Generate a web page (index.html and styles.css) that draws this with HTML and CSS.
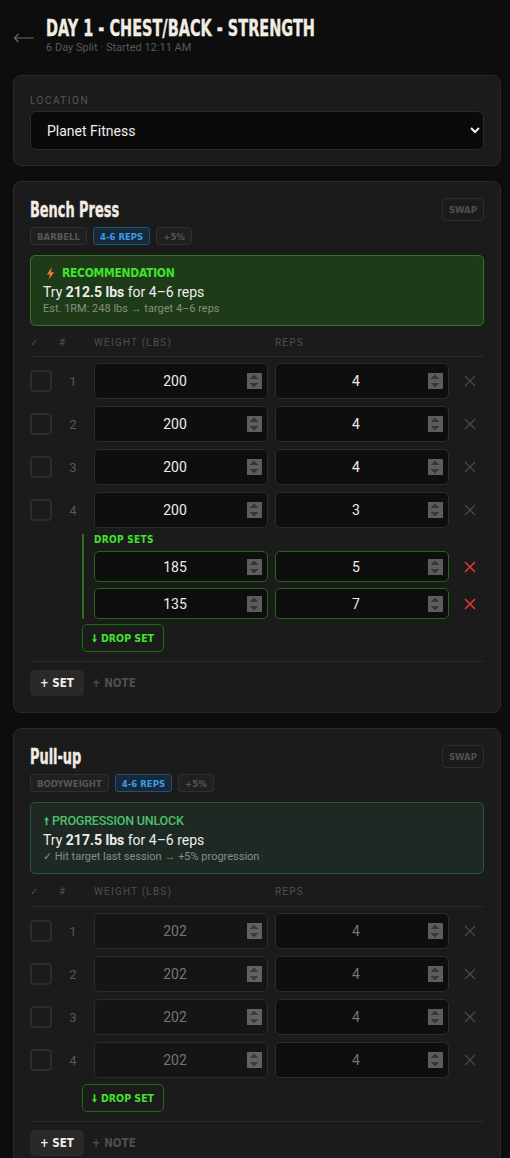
FILE: index.html
```html
<!DOCTYPE html>
<html lang="en">
<head>
<meta charset="utf-8">
<title>Day 1 - Chest/Back - Strength</title>
<link rel="stylesheet" href="styles.css">
</head>
<body>
<div class="page">
  <header class="top">
    <svg class="back" viewBox="0 0 22 10" aria-hidden="true"><path d="M21 5H1.5M5.5 1L1.5 5l4 4" fill="none" stroke="#6a6a6a" stroke-width="1.2"/></svg>
    <div class="top-text">
      <h1 class="title"><span class="cond">DAY 1 - CHEST/BACK - STRENGTH</span></h1>
      <div class="sub">6 Day Split · Started 12:11 AM</div>
    </div>
  </header>

  <section class="card loc">
    <label class="loc-label" for="loc">LOCATION</label>
    <select id="loc" class="loc-select"><option>Planet Fitness</option></select>
  </section>

  <section class="card ex">
    <div class="ex-head">
      <div>
        <h2 class="ex-name"><span class="cond">Bench Press</span></h2>
        <div class="tags"><span class="tag">BARBELL</span><span class="tag blue">4-6 REPS</span><span class="tag">+5%</span></div>
      </div>
      <button class="swap">SWAP</button>
    </div>
    <div class="rec">
      <div class="rec-h"><svg class="bolt" viewBox="0 0 10 14" aria-hidden="true"><path d="M6.5 0L1 8h3.5L3 14l6-8.5H5.5z" fill="#f07a3a"/></svg>RECOMMENDATION</div>
      <div class="rec-main">Try <b>212.5 lbs</b> for 4–6 reps</div>
      <div class="rec-note">Est. 1RM: 248 lbs → target 4–6 reps</div>
    </div>
    <div class="grid thead"><span>✓</span><span>#</span><span>WEIGHT (LBS)</span><span>REPS</span><span></span></div>
    <div class="sets">
      <div class="grid row"><span class="chk"></span><span class="num">1</span><input class="inp" type="number" value="200"><input class="inp" type="number" value="4"><span class="x"><svg viewBox="0 0 12 12"><path d="M1 1l10 10M11 1L1 11"/></svg></span></div>
      <div class="grid row"><span class="chk"></span><span class="num">2</span><input class="inp" type="number" value="200"><input class="inp" type="number" value="4"><span class="x"><svg viewBox="0 0 12 12"><path d="M1 1l10 10M11 1L1 11"/></svg></span></div>
      <div class="grid row"><span class="chk"></span><span class="num">3</span><input class="inp" type="number" value="200"><input class="inp" type="number" value="4"><span class="x"><svg viewBox="0 0 12 12"><path d="M1 1l10 10M11 1L1 11"/></svg></span></div>
      <div class="grid row"><span class="chk"></span><span class="num">4</span><input class="inp" type="number" value="200"><input class="inp" type="number" value="3"><span class="x"><svg viewBox="0 0 12 12"><path d="M1 1l10 10M11 1L1 11"/></svg></span></div>
    </div>
    <div class="drop-wrap">
      <div class="drops">
        <div class="drop-label">DROP SETS</div>
        <div class="drop-row"><input class="inp green" type="number" value="185"><input class="inp green" type="number" value="5"><span class="x red"><svg viewBox="0 0 12 12"><path d="M1 1l10 10M11 1L1 11"/></svg></span></div>
        <div class="drop-row"><input class="inp green" type="number" value="135"><input class="inp green" type="number" value="7"><span class="x red"><svg viewBox="0 0 12 12"><path d="M1 1l10 10M11 1L1 11"/></svg></span></div>
      </div>
      <button class="drop-btn"><svg class="darr" viewBox="0 0 6 10" aria-hidden="true"><path d="M2 0h2v6h2L3 10 0 6h2z" fill="#3fe52c"/></svg>DROP SET</button>
    </div>
    <div class="foot"><button class="add-set">+ SET</button><button class="add-note">+ NOTE</button></div>
  </section>

  <section class="card ex">
    <div class="ex-head">
      <div>
        <h2 class="ex-name"><span class="cond">Pull-up</span></h2>
        <div class="tags"><span class="tag">BODYWEIGHT</span><span class="tag blue">4-6 REPS</span><span class="tag">+5%</span></div>
      </div>
      <button class="swap">SWAP</button>
    </div>
    <div class="rec prog">
      <div class="rec-h"><svg class="uarr" viewBox="0 0 6 10" aria-hidden="true"><path d="M2 10h2V4h2L3 0 0 4h2z" fill="#4cc06c"/></svg>PROGRESSION UNLOCK</div>
      <div class="rec-main">Try <b>217.5 lbs</b> for 4–6 reps</div>
      <div class="rec-note">✓ Hit target last session → +5% progression</div>
    </div>
    <div class="grid thead"><span>✓</span><span>#</span><span>WEIGHT (LBS)</span><span>REPS</span><span></span></div>
    <div class="sets">
      <div class="grid row"><span class="chk"></span><span class="num">1</span><input class="inp dim w" type="number" placeholder="202"><input class="inp dim" type="number" placeholder="4"><span class="x"><svg viewBox="0 0 12 12"><path d="M1 1l10 10M11 1L1 11"/></svg></span></div>
      <div class="grid row"><span class="chk"></span><span class="num">2</span><input class="inp dim w" type="number" placeholder="202"><input class="inp dim" type="number" placeholder="4"><span class="x"><svg viewBox="0 0 12 12"><path d="M1 1l10 10M11 1L1 11"/></svg></span></div>
      <div class="grid row"><span class="chk"></span><span class="num">3</span><input class="inp dim w" type="number" placeholder="202"><input class="inp dim" type="number" placeholder="4"><span class="x"><svg viewBox="0 0 12 12"><path d="M1 1l10 10M11 1L1 11"/></svg></span></div>
      <div class="grid row"><span class="chk"></span><span class="num">4</span><input class="inp dim w" type="number" placeholder="202"><input class="inp dim" type="number" placeholder="4"><span class="x"><svg viewBox="0 0 12 12"><path d="M1 1l10 10M11 1L1 11"/></svg></span></div>
    </div>
    <div class="drop-wrap">
      <button class="drop-btn"><svg class="darr" viewBox="0 0 6 10" aria-hidden="true"><path d="M2 0h2v6h2L3 10 0 6h2z" fill="#3fe52c"/></svg>DROP SET</button>
    </div>
    <div class="foot"><button class="add-set">+ SET</button><button class="add-note">+ NOTE</button></div>
  </section>
</div>
</body>
</html>
```

FILE: styles.css
```css
* { box-sizing: border-box; }
html, body { margin: 0; background: #0d0d0d; }
body {
  font-family: Roboto, "Noto Sans", "Liberation Sans", sans-serif;
  color: #e8e8e8;
  color-scheme: dark;
}
.page { padding: 0 9px 40px 13px; }

.cond {
  display: inline-block;
  transform: scaleX(0.7);
  transform-origin: 0 50%;
  white-space: nowrap;
  -webkit-text-stroke: 0.35px currentColor;
}

.top { display: flex; align-items: center; gap: 11px; padding-top: 16px; }
.back { width: 22px; height: 10px; flex: none; margin-top: 4px; }
.title {
  margin: 0;
  font-family: "DejaVu Sans Condensed", sans-serif;
  font-weight: 700;
  font-size: 23px;
  line-height: 25px;
  color: #f1ede3;
}
.sub { font-size: 11px; line-height: 14px; color: #595959; }

.card {
  background: #1b1b1b;
  border: 1px solid #2a2a2a;
  border-radius: 8px;
  padding: 16px;
}
.loc { margin-top: 20px; padding-bottom: 15px; }
.loc-label {
  display: block;
  font-size: 10px;
  line-height: 14px;
  letter-spacing: 1.5px;
  color: #565656;
  margin: 2px 0 3px;
}
.loc-select {
  display: block;
  width: 100%;
  height: 39px;
  background: #0a0a0a;
  border: 1px solid #2a2a2a;
  border-radius: 6px;
  color: #eeeeee;
  font-family: inherit;
  font-size: 14px;
  padding: 0 10px 0 12px;
}

.ex { margin-top: 15px; }
.ex-head { display: flex; justify-content: space-between; align-items: flex-start; }
.ex-name {
  margin: 0;
  font-family: "DejaVu Sans Condensed", sans-serif;
  font-weight: 700;
  font-size: 20.5px;
  line-height: 25px;
  color: #f1ede3;
}
.tags { display: flex; gap: 6px; margin-top: 4px; }
.tag {
  height: 18px;
  display: inline-flex;
  align-items: center;
  padding: 0 6px;
  border: 1px solid #303030;
  background: #202020;
  border-radius: 3px;
  font-family: "DejaVu Sans Condensed", sans-serif;
  font-weight: 700;
  font-size: 9.5px;
  letter-spacing: 0;
  color: #565656;
}
.tag.blue { background: #16283a; border-color: #24506e; color: #3a9be6; }
.swap {
  height: 23px;
  padding: 0 6px;
  background: transparent;
  border: 1px solid #2e2e2e;
  border-radius: 4px;
  font-family: "DejaVu Sans Condensed", sans-serif;
  font-weight: 700;
  font-size: 9.5px;
  color: #505050;
}

.rec {
  margin-top: 10px;
  background: #1f3a19;
  border: 1px solid #2c7a1d;
  border-radius: 5px;
  padding: 10px 12px 9px;
}
.rec-h {
  display: flex;
  align-items: center;
  font-family: "DejaVu Sans Condensed", sans-serif;
  font-weight: 700;
  font-size: 12px;
  line-height: 14px;
  letter-spacing: -0.3px;
  color: #3fe52c;
  padding-left: 3px;
}
.bolt { width: 9px; height: 13px; margin-right: 7px; }
.rec-main { font-size: 14px; line-height: 19px; margin-top: 3px; color: #ececec; }
.rec-main b { font-weight: 700; }
.rec-note { font-size: 11px; line-height: 14px; color: #848f80; }
.rec.prog { background: #1f2924; border-color: #2a5639; padding-top: 11px; padding-left: 12px; }
.prog .rec-h { color: #4cc06c; font-weight: 500; font-family: Roboto, sans-serif; font-size: 12.5px; letter-spacing: -0.2px; padding-left: 1px; }
.prog .rec-note { color: #8a8a8a; }
.uarr { width: 5px; height: 10px; margin-right: 3px; }

.grid {
  display: grid;
  grid-template-columns: 22px 28px 174px 174px 28px;
  column-gap: 7px;
  align-items: center;
}
.thead {
  margin-top: 10px;
  padding: 0 0 6px;
  border-bottom: 1px solid #2a2a2a;
  font-size: 10px;
  line-height: 14px;
  letter-spacing: 1.2px;
  color: #4f4f4f;
}
.prog + .thead { margin-top: 11px; padding-bottom: 7px; }
.sets { display: flex; flex-direction: column; gap: 7px; margin-top: 6px; }
.row { height: 36px; }
.chk {
  width: 22px;
  height: 22px;
  border: 2px solid #2c2c2c;
  border-radius: 4px;
}
.num { text-align: center; font-size: 13px; color: #585858; }
.inp {
  width: 100%;
  height: 36px;
  background: #0e0e0e;
  border: 1px solid #2c2c2c;
  border-radius: 5px;
  padding: 0 5px 0 8px;
  text-align: center;
  font-family: inherit;
  font-size: 14px;
  color: #ececec;
  outline: none;
  color-scheme: light;
}
.inp::-webkit-inner-spin-button { opacity: 0.33; }
.inp.dim.w { background: #151515; }
.inp.dim::placeholder { color: #747474; opacity: 1; }
.x { display: flex; justify-content: center; align-items: center; }
.x svg { width: 12px; height: 12px; fill: none; stroke: #4a4a4a; stroke-width: 1.2; }
.x.red svg { stroke: #e0383a; stroke-width: 1.6; }

.drop-wrap { padding-left: 52px; margin-top: 6px; }
.drops {
  border-left: 2px solid #2b6f1c;
  padding: 0 0 0 10px;
}
.drop-label {
  font-family: "DejaVu Sans Condensed", sans-serif;
  font-weight: 700;
  font-size: 10px;
  line-height: 12px;
  letter-spacing: 0.3px;
  color: #3fe52c;
  margin-bottom: 5px;
}
.drop-row {
  display: grid;
  grid-template-columns: 174px 174px 28px;
  column-gap: 7px;
  align-items: center;
  margin-bottom: 6px;
}
.drop-row:last-child { margin-bottom: 0; }
.inp.green { height: 31px; border-color: #1f6a15; }
.drop-btn {
  display: inline-flex;
  align-items: center;
  gap: 4px;
  height: 28px;
  margin-top: 5px;
  padding: 0 9px;
  background: transparent;
  border: 1px solid #1f6a15;
  border-radius: 5px;
  font-family: "DejaVu Sans Condensed", sans-serif;
  font-weight: 700;
  font-size: 10.5px;
  color: #3fe52c;
}
.drop-wrap > .drop-btn:first-child { margin-top: 0; }
.darr { width: 5px; height: 9px; }

.foot {
  display: flex;
  align-items: center;
  gap: 8px;
  margin-top: 9px;
  padding-top: 8px;
  border-top: 1px solid #2a2a2a;
}
.add-set {
  height: 26px;
  padding: 0 10px;
  background: #292929;
  border: none;
  border-radius: 5px;
  font-family: "DejaVu Sans Condensed", sans-serif;
  font-weight: 700;
  font-size: 11.5px;
  color: #f1ede3;
}
.add-note {
  height: 26px;
  padding: 0;
  background: transparent;
  border: none;
  font-family: "DejaVu Sans Condensed", sans-serif;
  font-weight: 700;
  font-size: 11.5px;
  color: #4e4e4e;
}
```
